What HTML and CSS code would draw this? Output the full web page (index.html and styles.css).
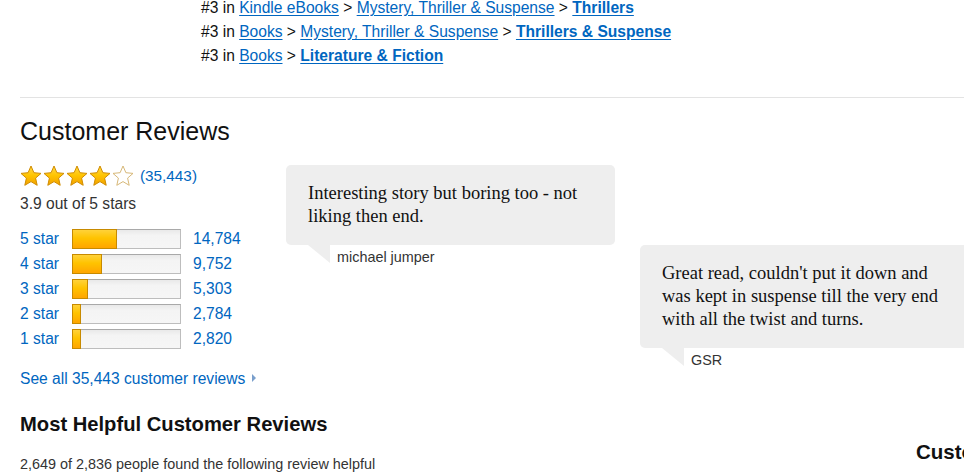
FILE: index.html
```html
<!DOCTYPE html>
<html lang="en">
<head>
<meta charset="utf-8">
<title>Customer Reviews</title>
<link rel="stylesheet" href="styles.css">
</head>
<body>
<div class="page">
  <ul class="ranks">
    <li>#3 in <a href="#">Kindle eBooks</a> &gt; <a href="#">Mystery, Thriller &amp; Suspense</a> &gt; <a href="#" class="strong">Thrillers</a></li>
    <li>#3 in <a href="#">Books</a> &gt; <a href="#">Mystery, Thriller &amp; Suspense</a> &gt; <a href="#" class="strong">Thrillers &amp; Suspense</a></li>
    <li>#3 in <a href="#">Books</a> &gt; <a href="#" class="strong">Literature &amp; Fiction</a></li>
  </ul>

  <hr class="divider">

  <h2 class="section-title">Customer Reviews</h2>

  <div class="reviews">
    <div class="summary">
      <div class="stars-row">
        <svg class="stars" width="115" height="22" viewBox="0 0 115 22" aria-label="3.9 out of 5 stars">
          <defs>
            <linearGradient id="gold" x1="0" y1="0" x2="0" y2="1">
              <stop offset="0" stop-color="#ffd84a"/>
              <stop offset="0.5" stop-color="#ffc400"/>
              <stop offset="1" stop-color="#f2a000"/>
            </linearGradient>
            <symbol id="star" viewBox="0 0 22 22">
              <polygon points="11,1 13.9,7.7 21,8.4 15.6,13.1 17.2,20.3 11,16.6 4.8,20.3 6.4,13.1 1,8.4 8.1,7.7"/>
            </symbol>
          </defs>
          <use href="#star" x="0" y="0" width="22" height="22" fill="url(#gold)" stroke="#d08c00" stroke-width="1" stroke-linejoin="round"/>
          <use href="#star" x="23" y="0" width="22" height="22" fill="url(#gold)" stroke="#d08c00" stroke-width="1" stroke-linejoin="round"/>
          <use href="#star" x="46" y="0" width="22" height="22" fill="url(#gold)" stroke="#d08c00" stroke-width="1" stroke-linejoin="round"/>
          <use href="#star" x="69" y="0" width="22" height="22" fill="url(#gold)" stroke="#d08c00" stroke-width="1" stroke-linejoin="round"/>
          <use href="#star" x="92" y="0" width="22" height="22" fill="#ffffff" stroke="#d7b878" stroke-width="1" stroke-linejoin="round"/>
        </svg>
        <a href="#" class="count">(35,443)</a>
      </div>
      <div class="average">3.9 out of 5 stars</div>

      <table class="histogram">
        <tr><td class="label"><a href="#">5 star</a></td><td><div class="bar"><div class="fill" style="width:42%"></div></div></td><td class="num"><a href="#">14,784</a></td></tr>
        <tr><td class="label"><a href="#">4 star</a></td><td><div class="bar"><div class="fill" style="width:28%"></div></div></td><td class="num"><a href="#">9,752</a></td></tr>
        <tr><td class="label"><a href="#">3 star</a></td><td><div class="bar"><div class="fill" style="width:15%"></div></div></td><td class="num"><a href="#">5,303</a></td></tr>
        <tr><td class="label"><a href="#">2 star</a></td><td><div class="bar"><div class="fill" style="width:8%"></div></div></td><td class="num"><a href="#">2,784</a></td></tr>
        <tr><td class="label"><a href="#">1 star</a></td><td><div class="bar"><div class="fill" style="width:8%"></div></div></td><td class="num"><a href="#">2,820</a></td></tr>
      </table>

      <a href="#" class="see-all">See all 35,443 customer reviews<span class="caret"></span></a>
    </div>

    <div class="quotes">
      <figure class="quote quote-first">
        <blockquote class="bubble">Interesting story but boring too - not liking then end.</blockquote>
        <figcaption class="author">michael jumper</figcaption>
      </figure>
      <figure class="quote quote-second">
        <blockquote class="bubble">Great read, couldn't put it down and was kept in suspense till the very end with all the twist and turns.</blockquote>
        <figcaption class="author">GSR</figcaption>
      </figure>
    </div>
  </div>

  <div class="lower">
    <div class="helpful">
      <h3 class="helpful-title">Most Helpful Customer Reviews</h3>
      <div class="helpful-note">2,649 of 2,836 people found the following review helpful</div>
    </div>
    <div class="side">
      <h3 class="side-title">Customer Images</h3>
    </div>
  </div>
</div>
</body>
</html>
```

FILE: styles.css
```css
html, body {
  margin: 0;
  padding: 0;
  overflow: hidden;
  background: #ffffff;
}

body {
  font-family: "Liberation Sans", Arial, sans-serif;
  color: #111111;
}

a {
  color: #0066c0;
  text-decoration: none;
}

.page {
  padding-left: 20px;
  width: 1200px;
}

/* ranks */
.ranks {
  list-style: none;
  margin: 0;
  padding: 1px 0 0 181px;
  font-size: 15.6px;
  line-height: 14px;
  color: #111111;
}

.ranks li {
  margin-bottom: 10px;
}

.ranks li:last-child {
  margin-bottom: 0;
}

.ranks a {
  text-decoration: underline;
  text-underline-offset: 2px;
}

.ranks a.strong {
  font-weight: bold;
}

.divider {
  margin: 34px 0 0 0;
  width: 944px;
  border: 0;
  border-top: 1px solid #e3e3e3;
  height: 0;
}

.section-title {
  margin: 19px 0 0 0;
  font-size: 25px;
  line-height: 28px;
  font-weight: normal;
  color: #111111;
}

.reviews {
  display: flex;
  align-items: flex-start;
  margin-top: 19px;
}

.summary {
  width: 266px;
  flex-shrink: 0;
}

.stars-row {
  display: flex;
  align-items: center;
  height: 24px;
  gap: 5px;
}

.stars {
  display: block;
}

.count {
  font-size: 15.3px;
  line-height: 24px;
}

.average {
  margin-top: 7px;
  font-size: 15.6px;
  line-height: 18px;
  color: #333333;
}

.histogram {
  border-collapse: collapse;
  margin-top: 13px;
}

.histogram td {
  padding: 0;
  height: 25px;
  font-size: 15.6px;
  line-height: 18px;
  vertical-align: middle;
}

.histogram .label {
  width: 52px;
}

.histogram .num {
  padding-left: 12px;
}

.bar {
  box-sizing: border-box;
  width: 109px;
  height: 20px;
  border: 1px solid #bdbdbd;
  border-top-color: #a9a9a9;
  background: linear-gradient(#e9e9e9, #f4f4f4 30%, #f6f6f6);
  display: flex;
}

.fill {
  box-sizing: border-box;
  background: linear-gradient(#ffd23a, #ffc300 45%, #ffa500);
  border: 1px solid #c78a00;
  margin: -1px 0 0 -1px;
  height: 20px;
}

.see-all {
  display: inline-block;
  margin-top: 19px;
  font-size: 15.6px;
  line-height: 18px;
}

.caret {
  display: inline-block;
  width: 0;
  height: 0;
  margin-left: 7px;
  vertical-align: 2px;
  border-top: 4px solid transparent;
  border-bottom: 4px solid transparent;
  border-left: 4px solid #7a9fcc;
}

/* quotes */
.quotes {
  display: flex;
  gap: 25px;
  align-items: flex-start;
}

.quote {
  margin: 0;
  width: 329px;
  flex-shrink: 0;
}

.quote-first {
  margin-top: 1px;
}

.quote-second {
  margin-top: 81px;
}

.bubble {
  position: relative;
  margin: 0;
  padding: 17px 22px;
  background: #eeeeee;
  border-radius: 5px;
  font-family: "Liberation Serif", "Times New Roman", serif;
  font-size: 18.5px;
  line-height: 23px;
  color: #111111;
}

.bubble::after {
  content: "";
  position: absolute;
  left: 22px;
  top: 100%;
  width: 0;
  height: 0;
  border-top: 18px solid #eeeeee;
  border-left: 22px solid transparent;
}

.author {
  margin: 4px 0 0 51px;
  font-size: 14.4px;
  line-height: 16px;
  color: #333333;
}

/* lower */
.lower {
  display: flex;
  margin-top: 24px;
}

.helpful {
  width: 896px;
  flex-shrink: 0;
}

.helpful-title {
  margin: 0;
  font-size: 20.2px;
  line-height: 24px;
  font-weight: bold;
  color: #111111;
}

.helpful-note {
  margin-top: 20px;
  font-size: 14.4px;
  line-height: 16px;
  color: #333333;
}

.side {
  padding-top: 28px;
}

.side-title {
  margin: 0;
  font-size: 20.5px;
  line-height: 24px;
  font-weight: bold;
  color: #111111;
  white-space: nowrap;
}
```
